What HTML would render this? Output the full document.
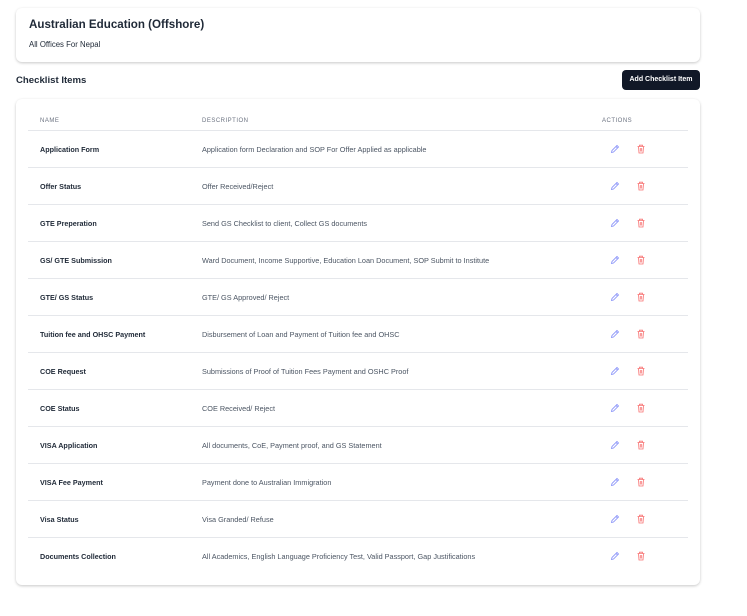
<!DOCTYPE html>
<html><head><style>
body{margin:0;background:#fff;font-family:"Liberation Sans",sans-serif;color:#111827;width:747px;height:616px;overflow:hidden;position:relative}
.card{position:absolute;background:#fff;border-radius:6px;box-shadow:0 1px 3px rgba(0,0,0,.15),0 1px 2px rgba(0,0,0,.08)}
.t{position:absolute;white-space:nowrap}
.row{position:absolute;left:28px;width:660px;height:37px;border-top:1px solid #e5e7eb}
.row .n{position:absolute;left:12px;top:14px;font-size:7.2px;font-weight:bold;color:#1f2937}
.row .d{position:absolute;left:174px;top:14px;font-size:7.3px;color:#4b5563}
.row svg{position:absolute;top:13px}
</style></head><body>
<div class="card" style="left:16px;top:8px;width:684px;height:54px"></div>
<div class="t" style="left:29px;top:18px;font-size:11.6px;font-weight:bold;color:#1f2937">Australian Education (Offshore)</div>
<div class="t" style="left:29px;top:40px;font-size:7.8px;color:#1f2937">All Offices For Nepal</div>
<div class="t" style="left:16px;top:75px;font-size:9.6px;font-weight:bold;color:#1f2937">Checklist Items</div>
<div class="t" style="left:622px;top:70px;width:78px;height:20px;background:#111827;border-radius:4px;color:#fff;font-size:7px;font-weight:bold;line-height:20px;text-align:center">Add Checklist Item</div>
<div class="card" style="left:16px;top:99px;width:684px;height:486px"></div>
<div class="t" style="left:40px;top:118px;font-size:6px;color:#6b7280;letter-spacing:.5px">NAME</div>
<div class="t" style="left:202px;top:118px;font-size:6px;color:#6b7280;letter-spacing:.5px">DESCRIPTION</div>
<div class="t" style="left:602px;top:118px;font-size:6px;color:#6b7280;letter-spacing:.5px">ACTIONS</div>
<div id="rows"></div>
<script>
var d=[["Application Form","Application form Declaration and SOP For Offer Applied as applicable"],["Offer Status","Offer Received/Reject"],["GTE Preperation","Send GS Checklist to client, Collect GS documents"],["GS/ GTE Submission","Ward Document, Income Supportive, Education Loan Document, SOP Submit to Institute"],["GTE/ GS Status","GTE/ GS Approved/ Reject"],["Tuition fee and OHSC Payment","Disbursement of Loan and Payment of Tuition fee and OHSC"],["COE Request","Submissions of Proof of Tuition Fees Payment and OSHC Proof"],["COE Status","COE Received/ Reject"],["VISA Application","All documents, CoE, Payment proof, and GS Statement"],["VISA Fee Payment","Payment done to Australian Immigration"],["Visa Status","Visa Granded/ Refuse"],["Documents Collection","All Academics, English Language Proficiency Test, Valid Passport, Gap Justifications"]];
var h="";
d.forEach(function(r,i){h+='<div class="row" style="top:'+(130+i*37)+'px"><div class="n">'+r[0]+'</div><div class="d">'+r[1]+'</div>'+
'<svg style="left:582px" width="10" height="10" viewBox="0 0 10 10"><path d="M1.5 8.5 L2 6.5 L7 1.5 L8.5 3 L3.5 8 Z M6 2.5 L7.5 4" fill="none" stroke="#818cf8" stroke-width=".8"/></svg>'+
'<svg style="left:608px" width="10" height="10" viewBox="0 0 10 10"><path d="M1.5 2.5 H8.5 M3.5 2.5 V1.2 H6.5 V2.5 M2.5 2.5 L3 9 H7 L7.5 2.5 M4.3 4 V7.5 M5.7 4 V7.5" fill="none" stroke="#f87171" stroke-width=".8"/></svg></div>';});
document.getElementById("rows").innerHTML=h;
</script>
</body></html>
